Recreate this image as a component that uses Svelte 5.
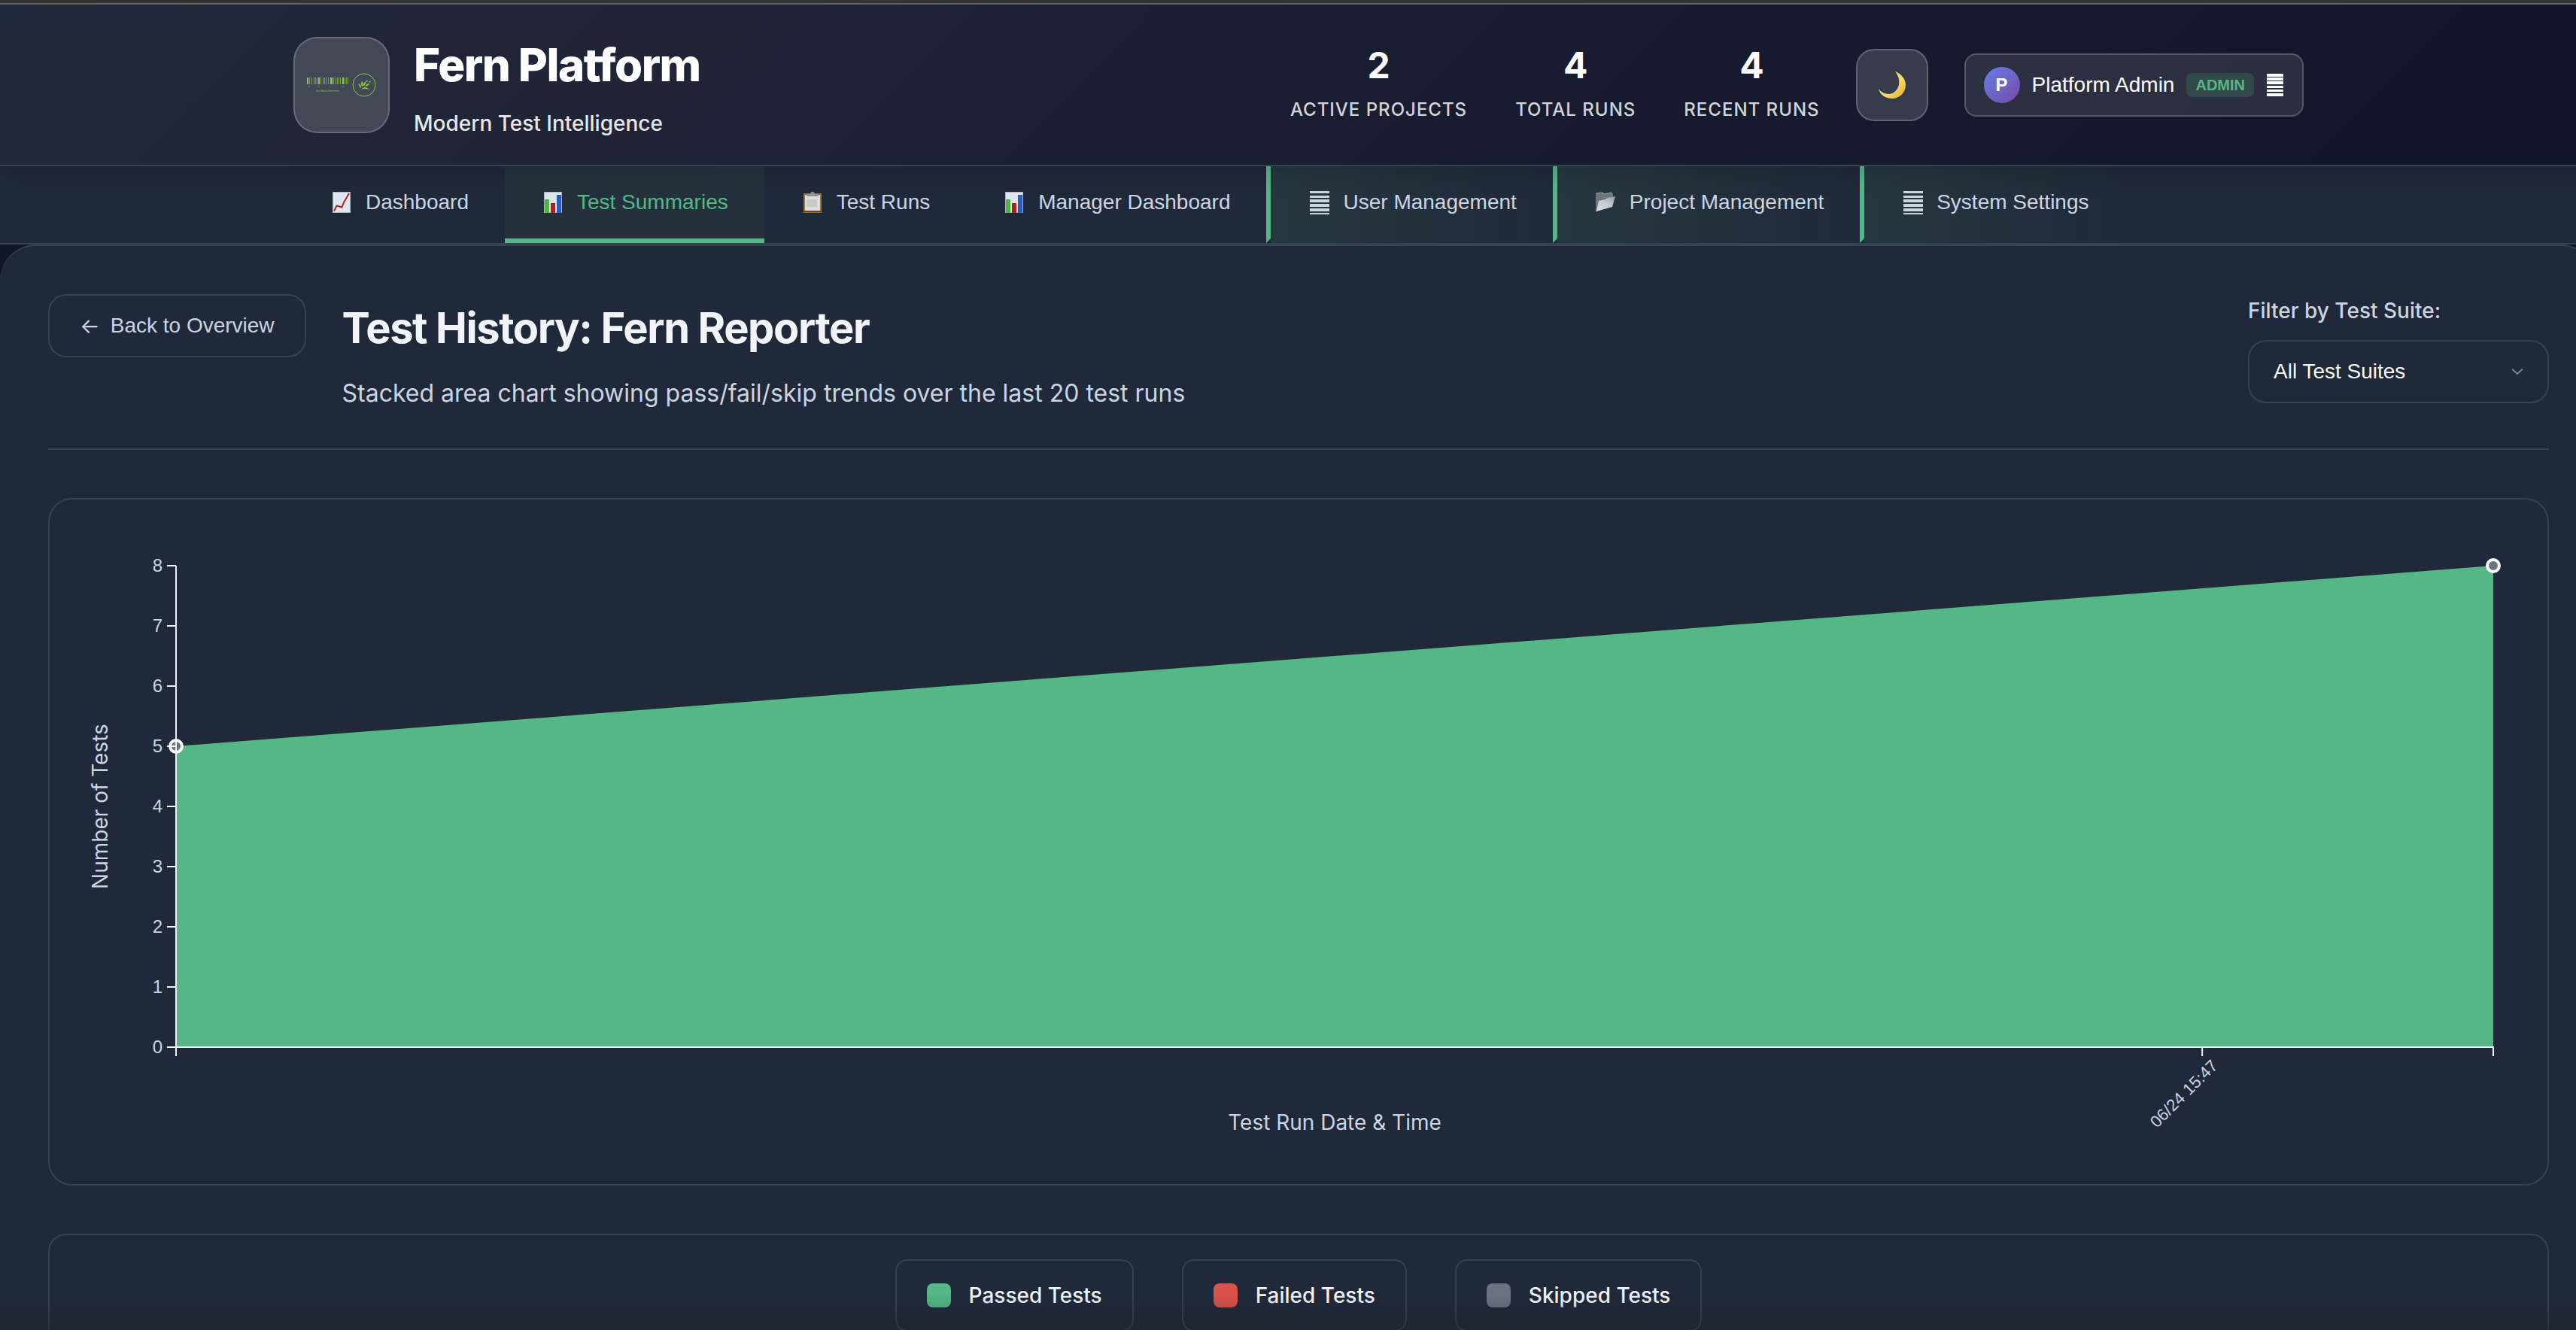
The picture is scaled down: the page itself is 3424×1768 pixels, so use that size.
<script>
  const stats = [
    { value: 2, label: 'Active Projects' },
    { value: 4, label: 'Total Runs' },
    { value: 4, label: 'Recent Runs' }
  ];

  const tabs = [
    { icon: 'trend', label: 'Dashboard' },
    { icon: 'bars', label: 'Test Summaries', active: true },
    { icon: 'clipboard', label: 'Test Runs' },
    { icon: 'bars', label: 'Manager Dashboard' },
    { icon: 'stripes', label: 'User Management', admin: true },
    { icon: 'folder', label: 'Project Management', admin: true },
    { icon: 'stripes', label: 'System Settings', admin: true }
  ];

  const legend = [
    { kind: 'passed', label: 'Passed Tests' },
    { kind: 'failed', label: 'Failed Tests' },
    { kind: 'skipped', label: 'Skipped Tests' }
  ];

  // x position and width of each bar of the logo's barcode
  const barcode = [
    [0, 2], [3, 1], [6, 1], [9, 1], [11, 1], [13, 1], [15, 2], [18, 1], [21, 1], [23, 1],
    [25, 1], [28, 1], [31, 3], [35, 1], [38, 1], [40, 1], [42, 1], [44, 1], [47, 2], [50, 1], [52, 1], [54, 1]
  ];

  const margin = { top: 40, right: 24, bottom: 134, left: 120 };
  const height = 814;
  const maxValue = 8;
  const runs = [
    { at: 0, passed: 5 },
    { at: 1, passed: 8 }
  ];
  const timeTick = { at: 0.8744, label: '06/24 15:47' };
  const ticks = Array.from({ length: maxValue + 1 }, (_, i) => i);

  let width = $state(3224);
  let right = $derived(width - margin.right);
  const bottom = height - margin.bottom;
  const y = (v) => bottom - (v / maxValue) * (bottom - margin.top);
  let x = $derived((t) => margin.left + t * (right - margin.left));
  let area = $derived(
    `M${x(0)} ${bottom} ` + runs.map((r) => `L${x(r.at)} ${y(r.passed)}`).join(' ') + ` L${x(1)} ${bottom}Z`
  );
</script>

{#snippet icon(name)}
  <svg class="icon" viewBox="0 0 32 32" aria-hidden="true">
    {#if name === 'trend'}
      <rect x="4" y="2" width="24" height="28" fill="#aab4bd" />
      <rect x="5" y="3" width="22" height="26" fill="#dfe7ee" />
      <path d="M6 27.500 L9.500 20.500 L16.500 22.500 L19 16 L26 4" fill="none" stroke="#b5251c" stroke-width="2" />
    {:else if name === 'bars'}
      <rect x="4" y="2" width="24" height="28" fill="#aab4bd" />
      <rect x="5" y="3" width="22" height="26" fill="#dfe7ee" />
      <rect x="5" y="12" width="6" height="18" fill="#4fb53c" />
      <rect x="13" y="17" width="6" height="13" fill="#ab241c" />
      <rect x="21" y="6" width="6" height="24" fill="#2a5cc4" />
    {:else if name === 'clipboard'}
      <rect x="4" y="4" width="24" height="26" rx="1" fill="#9a7038" />
      <rect x="6" y="6" width="20" height="22" fill="#dedede" />
      <path d="M8 12h14v10H8z" fill="#c9c9c9" />
      <rect x="5" y="27" width="22" height="2" fill="#6d4619" />
      <path d="M8 8V5h5a3 3 0 0 1 6 0h5v3z" fill="#8f9397" />
    {:else if name === 'folder'}
      <defs>
        <linearGradient id="flap" x1="0" y1="1" x2="1" y2="0">
          <stop offset="0" stop-color="#dadddf" />
          <stop offset="0.6" stop-color="#c3c7ca" />
          <stop offset="1" stop-color="#8f989d" />
        </linearGradient>
      </defs>
      <path d="M3 5l1-1 8-1 2 2 10-2 2 1v6L5 28l-2 1z" fill="#6b767e" />
      <path d="M3 5l1-1 8-1 2 2 10-2" fill="none" stroke="#9fa8ad" />
      <path d="M7 14l9-2 3-2 10-2-4 14-21 6z" fill="url(#flap)" />
    {:else}
      <path d="M4 1h26v3H4zM4 7h26v3H4zM4 12h26v4H4zM4 18h26v4H4zM4 24h26v4H4zM4 30h26v2H4z" fill="currentColor" />
    {/if}
  </svg>
{/snippet}

<div class="page">
  <header class="top">
    <div class="wrap top-row">
      <div class="brand">
        <div class="logo">
          <svg viewBox="0 0 96 40" aria-hidden="true">
            {#each barcode as [bx, bw]}
              <rect x={bx + 2} y="10" width={bw} height="9" fill="#8cc63f" opacity={bw > 1 ? 1 : 0.7} />
            {/each}
            <path d="M4 22h2M16 22h3M32 22h1M48 22h1M50 22h1" stroke="#8cc63f" opacity="0.6" />
            <text x="29" y="29" text-anchor="middle" font-size="3" fill="#8cc63f">Test Report Generator</text>
            <circle cx="78" cy="20" r="15" fill="none" stroke="#8cc63f" />
            <path d="M74 26q5-6 11 0q-5-2-11 0zM73 24q-2-4-3-6q4 1 4 5zM75 22q-2-4 0-7q3 3 1 7zM77 21q0-4 3-6q1 3-2 6zM79 22q2-4 6-4q-1 3-5 4zM80 16l2-3 1 2zM84 16l3-2-1 3z" fill="#8cc63f" />
          </svg>
        </div>
        <div class="brand-text">
          <h1>Fern Platform</h1>
          <p>Modern Test Intelligence</p>
        </div>
      </div>

      <div class="actions">
        <dl class="stats">
          {#each stats as s}
            <div class="stat">
              <dd>{s.value}</dd>
              <dt>{s.label}</dt>
            </div>
          {/each}
        </dl>
        <button class="theme" aria-label="Toggle theme">
          <svg viewBox="0 0 36 36" aria-hidden="true">
            <defs>
              <linearGradient id="moon" x1="0" y1="0" x2="1" y2="1">
                <stop offset="0" stop-color="#f9e58f" />
                <stop offset="0.6" stop-color="#f6d862" />
                <stop offset="1" stop-color="#d9a93c" />
              </linearGradient>
            </defs>
            <path d="M22 0C30 3 36 10 36 18C36 28 28 36 18 36C9 36 2 31 0 23C5 30 13 31 18 29C28 25 31 11 22 0Z" fill="url(#moon)" />
          </svg>
        </button>
        <button class="user">
          <span class="avatar">P</span>
          <span>Platform Admin</span>
          <span class="badge">ADMIN</span>
          <svg class="menu" viewBox="0 0 24 30" aria-hidden="true">
            <path d="M1 0h22v4H1zM1 5h22v4H1zM1 10h22v4H1zM1 16h22v3H1zM1 21h22v3H1zM1 26h22v4H1z" fill="#fff" />
          </svg>
        </button>
      </div>
    </div>
  </header>

  <nav class="nav">
    <div class="wrap tabs">
      {#each tabs as t}
        <button class="tab" class:active={t.active} class:admin={t.admin}>
          {@render icon(t.icon)}
          <span>{t.label}</span>
        </button>
      {/each}
    </div>
  </nav>

  <main class="main">
    <section class="heading">
      <button class="back"><span class="arrow" aria-hidden="true">←</span><span>Back to Overview</span></button>
      <div class="heading-text">
        <h2>Test History: Fern Reporter</h2>
        <p>Stacked area chart showing pass/fail/skip trends over the last 20 test runs</p>
      </div>
      <div class="filter">
        <label for="suite">Filter by Test Suite:</label>
        <div class="select">
          <select id="suite">
            <option>All Test Suites</option>
          </select>
          <svg viewBox="0 0 16 8" aria-hidden="true">
            <path d="M1 0.500l7 6.500 7-6.500" fill="none" stroke="#7b8494" stroke-width="2" />
          </svg>
        </div>
      </div>
    </section>

    <section class="chart">
      <div class="plot" bind:clientWidth={width}>
        <svg {width} {height} role="img" aria-label="Passed tests per run">
          <path d={area} fill="#56b786" />
          {#each runs as r}
            <circle cx={x(r.at)} cy={y(r.passed)} r="8" fill="#6b7280" stroke="#fff" stroke-width="4" />
          {/each}
          <path d={`M${x(0)} ${margin.top}V${bottom + 12}M${x(0)} ${bottom}H${x(1)}V${bottom + 12}`} class="axis" />
          <path d={`M${x(timeTick.at)} ${bottom}v12`} class="axis" />
          {#each ticks as t}
            <path d={`M${x(0) - 12} ${y(t)}h12`} class="axis" />
            <text x={x(0) - 18} y={y(t)} dy="8" text-anchor="end" class="tick">{t}</text>
          {/each}
          <text transform={`translate(${x(timeTick.at) + 22} ${bottom + 26}) rotate(-45)`} text-anchor="end" class="time">{timeTick.label}</text>
          <text x={(x(0) + x(1)) / 2} y={height - 24} text-anchor="middle" class="title">Test Run Date &amp; Time</text>
          <text transform={`translate(29 ${(margin.top + bottom) / 2}) rotate(-90)`} text-anchor="middle" class="title">Number of Tests</text>
        </svg>
      </div>
    </section>

    <section class="legend">
      {#each legend as l}
        <div class="legend-item">
          <span class="swatch {l.kind}"></span>
          <span>{l.label}</span>
        </div>
      {/each}
    </section>
  </main>
  <div class="fade"></div>
</div>

<style>
  :global(body) {
    margin: 0;
    background: #111528;
    overflow: hidden;
  }
  .page {
    position: relative;
    width: calc(100% + 28px);
    height: 100vh;
    overflow: hidden;
    box-sizing: border-box;
    border-top: 4px solid #333;
    color: #cbd5e1;
    font-family: Inter, "Liberation Sans", sans-serif;
    font-size: 28px;
    line-height: 40px;
  }
  .page button, .page select {
    font-family: "Liberation Sans", Arial, sans-serif;
    font-size: 28px;
    line-height: 40px;
  }
  .page * { box-sizing: border-box; }
  h1, h2, p, dl, dd { margin: 0; }
  button { cursor: pointer; }

  .wrap {
    max-width: 2800px;
    margin: 0 auto;
    padding: 0 64px;
  }
  .top {
    position: relative;
    z-index: 1;
    border-top: 2px solid #666;
    border-bottom: 2px solid #364153;
    background: linear-gradient(135deg, #202939 0%, #1f2236 32%, #161b2f 62%, #111529 100%);
    box-shadow: 0 20px 30px -10px rgba(0, 0, 0, 0.15);
  }
  .top-row {
    display: flex;
    justify-content: space-between;
    align-items: center;
    height: 213px;
  }
  .brand, .actions {
    display: flex;
    align-items: center;
  }
  .brand { gap: 32px; }
  .logo {
    display: grid;
    place-items: center;
    width: 128px;
    height: 128px;
    border: 2px solid rgba(255, 255, 255, 0.2);
    border-radius: 32px;
    background: rgba(255, 255, 255, 0.16);
  }
  .logo svg { width: 96px; height: 40px; }
  .brand-text h1 {
    color: #fff;
    font-size: 60px;
    line-height: 102px;
    font-weight: 800;
    letter-spacing: -0.025em;
  }
  .brand-text p {
    color: #e5e7ea;
    line-height: 54px;
    font-weight: 500;
  }
  .actions { gap: 48px; }
  .stats { display: flex; gap: 64px; }
  .stat {
    display: flex;
    flex-direction: column;
    align-items: center;
  }
  .stat dd {
    color: #fff;
    font-size: 48px;
    line-height: 66px;
    font-weight: 700;
  }
  .stat dt {
    color: #d3d4d8;
    font-size: 24px;
    line-height: 52px;
    font-weight: 500;
    letter-spacing: 1px;
    text-transform: uppercase;
  }
  .theme {
    display: grid;
    place-items: center;
    width: 96px;
    height: 96px;
    padding: 0;
    border: 2px solid rgba(255, 255, 255, 0.2);
    border-radius: 24px;
    background: rgba(255, 255, 255, 0.15);
  }
  .theme svg { width: 36px; height: 36px; }
  .user {
    display: flex;
    align-items: center;
    gap: 16px;
    height: 84px;
    padding: 0 24px;
    border: 2px solid rgba(255, 255, 255, 0.2);
    border-radius: 16px;
    background: rgba(255, 255, 255, 0.1);
    color: #fff;
  }
  .avatar {
    display: grid;
    place-items: center;
    width: 48px;
    height: 48px;
    border-radius: 50%;
    background: linear-gradient(135deg, #667eea, #764ba2);
    font-size: 24px;
    font-weight: 700;
  }
  .badge {
    padding: 0 12px;
    border-radius: 8px;
    background: #32494c;
    color: #56b786;
    font-size: 20px;
    line-height: 32px;
    font-weight: 700;
  }
  .menu { width: 24px; height: 30px; }

  .nav {
    border-bottom: 2px solid #364153;
    background: #202939;
  }
  .tabs { display: flex; }
  .tab {
    display: flex;
    align-items: center;
    gap: 16px;
    height: 102px;
    padding: 0 48px;
    border: 0 solid transparent;
    border-bottom-width: 6px;
    background: none;
    color: #cbd5e1;
    white-space: nowrap;
  }
  .tab.active {
    border-bottom-color: #56b786;
    background: #24313d;
    color: #56b786;
  }
  .tab.admin {
    border-left: 6px solid #56b786;
    background: linear-gradient(90deg, rgba(86, 183, 134, 0.1), transparent);
  }
  .icon { width: 32px; height: 32px; }

  .main {
    display: flex;
    flex-direction: column;
    gap: 64px;
    min-height: 1500px;
    padding: 64px;
    border: 0 solid #364153;
    border-width: 2px 0;
    border-radius: 48px;
    background: #202939;
  }
  .heading {
    display: flex;
    align-items: flex-start;
    gap: 48px;
    padding-bottom: 48px;
    border-bottom: 2px solid #364153;
  }
  .back {
    display: flex;
    align-items: center;
    gap: 14px;
    height: 84px;
    padding: 0 40px;
    border: 2px solid #364153;
    border-radius: 24px;
    background: none;
    color: #cbd5e1;
  }
  .arrow { font-family: Inter, sans-serif; }
  .heading-text {
    display: flex;
    flex: 1;
    flex-direction: column;
    gap: 16px;
  }
  h2 {
    color: #f1f5f9;
    font-size: 56px;
    line-height: 90px;
    font-weight: 700;
    letter-spacing: -0.025em;
  }
  .heading-text p {
    font-size: 32px;
    line-height: 51px;
  }
  .filter {
    display: flex;
    flex-direction: column;
    gap: 16px;
    width: 400px;
  }
  .filter label { line-height: 45px; font-weight: 500; }
  .select {
    display: grid;
    align-items: center;
  }
  .select select, .select svg { grid-area: 1 / 1; }
  .select select {
    appearance: none;
    width: 100%;
    height: 84px;
    padding: 0 32px;
    border: 2px solid #364153;
    border-radius: 24px;
    background: none;
    color: #f8fafc;
  }
  .select svg {
    justify-self: end;
    width: 16px;
    height: 8px;
    margin-right: 34px;
    pointer-events: none;
  }
  .chart {
    padding: 48px;
    border: 2px solid #364153;
    border-radius: 32px;
  }
  .plot { overflow: hidden; }
  .plot svg { display: block; }
  .axis { fill: none; stroke: #f1f5f9; stroke-width: 2; }
  .plot text { fill: #cbd5e1; }
  .tick, .time { font-family: "Liberation Sans", Arial, sans-serif; }
  .tick { font-size: 24px; }
  .time { font-size: 22px; }
  .title { font-size: 28px; }

  .legend {
    display: flex;
    justify-content: center;
    gap: 64px;
    padding: 32px;
    border: 2px solid #364153;
    border-radius: 24px;
  }
  .legend-item {
    display: flex;
    align-items: center;
    gap: 24px;
    height: 96px;
    padding: 0 40px;
    border: 2px solid #364153;
    border-radius: 16px;
    color: #f1f5f9;
    font-weight: 500;
  }
  .swatch {
    width: 32px;
    height: 32px;
    border-radius: 8px;
  }
  .passed { background: #56b786; }
  .failed { background: #dc524a; }
  .skipped { background: #6b7280; }
  .fade {
    position: absolute;
    inset: auto 0 0;
    height: 48px;
    background: linear-gradient(transparent, rgba(28, 30, 40, 0.35));
    pointer-events: none;
  }
</style>
